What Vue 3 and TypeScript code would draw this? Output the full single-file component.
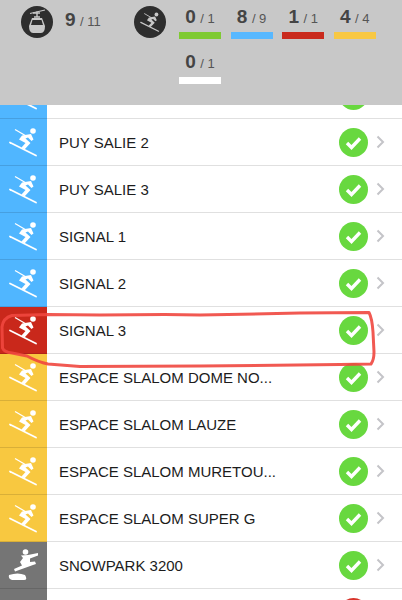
<script setup lang="ts">
// 雪道状态列表
type Run = { name: string; color: string; kind: 'ski' | 'board' | 'none'; status?: 'open' | 'closed' }

const runs: Run[] = [
  { name: '', color: 'blue', kind: 'ski' },
  { name: 'PUY SALIE 2', color: 'blue', kind: 'ski' },
  { name: 'PUY SALIE 3', color: 'blue', kind: 'ski' },
  { name: 'SIGNAL 1', color: 'blue', kind: 'ski' },
  { name: 'SIGNAL 2', color: 'blue', kind: 'ski' },
  { name: 'SIGNAL 3', color: 'red', kind: 'ski' },
  { name: 'ESPACE SLALOM DOME NO...', color: 'yellow', kind: 'ski' },
  { name: 'ESPACE SLALOM LAUZE', color: 'yellow', kind: 'ski' },
  { name: 'ESPACE SLALOM MURETOU...', color: 'yellow', kind: 'ski' },
  { name: 'ESPACE SLALOM SUPER G', color: 'yellow', kind: 'ski' },
  { name: 'SNOWPARK 3200', color: 'grey', kind: 'board' },
  { name: '', color: 'grey', kind: 'none', status: 'closed' },
]

const stats = [
  { done: 0, total: 1, color: 'green' },
  { done: 8, total: 9, color: 'blue' },
  { done: 1, total: 1, color: 'red' },
  { done: 4, total: 4, color: 'yellow' },
  { done: 0, total: 1, color: 'white' },
]
</script>

<template>
  <div class="page">
    <!-- 顶部统计 -->
    <header class="summary">
      <div class="lifts">
        <svg class="badge" viewBox="0 0 32 32">
          <circle cx="16" cy="16" r="16" fill="#2e2e2e" />
          <path d="M9 7.5 L24 4" stroke="#c8c8c8" stroke-width="1.2" fill="none" />
          <path d="M16 5.5 V11 M12 7 h7 M13 11 h6" stroke="#c8c8c8" stroke-width="1.4" fill="none" />
          <path d="M11 12 h10 l3 8 q0 7 -4 7 h-8 q-4 0 -4 -7 z" fill="#c8c8c8" />
          <path d="M11.5 14 h9 l1.5 5 h-12 z" fill="#2e2e2e" />
        </svg>
        <span class="count"><b>9</b> <i>/ 11</i></span>
      </div>
      <svg class="badge ski-badge" viewBox="0 0 47 46">
        <circle cx="23.5" cy="23" r="23.5" fill="#2e2e2e" />
        <g fill="#c8c8c8" stroke="#c8c8c8">
          <circle cx="33" cy="12" r="2.8" stroke="none" />
          <path d="M15 10.5 L27 17.5" stroke-width="1.3" fill="none" />
          <path d="M31 15 L22 16.5 L19 20.5 L25.5 24 L21.5 28.5 L24.5 30.5 L30.5 24 L25.5 19.5 L28 18.5 L31.5 22 L33.5 20.5 Z" stroke="none" />
          <path d="M10 23.5 L36 36.5" stroke-width="1.8" fill="none" stroke-linecap="round" />
        </g>
      </svg>
      <div class="stats">
        <div v-for="s in stats" :key="s.color" class="stat">
          <span class="count"><b>{{ s.done }}</b> <i>/ {{ s.total }}</i></span>
          <span class="bar" :class="s.color"></span>
        </div>
      </div>
    </header>

    <div class="viewport">
      <ul class="list">
        <li v-for="(r, i) in runs" :key="i" class="row">
          <div class="cell" :class="r.color">
            <svg v-if="r.kind === 'ski'" class="icon" viewBox="0 0 47 46">
              <g fill="#fff" stroke="#fff">
                <circle cx="33" cy="12" r="2.8" stroke="none" />
                <path d="M15 10.5 L27 17.5" stroke-width="1.3" fill="none" />
                <path d="M31 15 L22 16.5 L19 20.5 L25.5 24 L21.5 28.5 L24.5 30.5 L30.5 24 L25.5 19.5 L28 18.5 L31.5 22 L33.5 20.5 Z" stroke="none" />
                <path d="M10 23.5 L36 36.5" stroke-width="1.8" fill="none" stroke-linecap="round" />
              </g>
            </svg>
            <svg v-else-if="r.kind === 'board'" class="icon" viewBox="0 0 47 46">
              <g fill="#fff">
                <circle cx="25.5" cy="10" r="2.8" />
                <path d="M21 13.5 L28 13 L38 11 L38 13.5 L30 16.5 L30 20 L35 19.5 L36 22 L33 23 L15 29.5 L14 27 L22 23.5 L20 20 L23 16 Z" />
                <path d="M9 33 Q18 30 25 33 Q28 38 24 38 L12 38 Q8 37 9 33 Z" />
              </g>
            </svg>
          </div>
          <div class="body">
            <span class="name">{{ r.name }}</span>
            <svg v-if="r.status !== 'closed'" class="check" viewBox="0 0 29 29">
              <circle cx="14.5" cy="14.5" r="14.5" fill="#68d83f" />
              <path d="M8 15 L12.5 19.5 L21 10.5" stroke="#fff" stroke-width="3.4" fill="none" />
            </svg>
            <span v-else class="check closed"></span>
            <svg class="chevron" viewBox="0 0 9 14">
              <path d="M1.5 1.5 L7 7 L1.5 12.5" stroke="#c4c4c8" stroke-width="2" fill="none" />
            </svg>
          </div>
        </li>
      </ul>
    </div>

    <!-- 手绘红圈标注 -->
    <svg class="scribble" viewBox="0 0 402 600">
      <path
        d="M48 314.5 L12 315.5 Q3 318 2 327 L2.5 348 Q4 352 12 353 L27 356 Q38 362 48 364 L80 366.5 L200 366 L340 364.5 L371 364 Q374 360 374 352 L373 332 Q372 318 369 312.5 L300 313 L200 315 L165 314.5 L100 315 Z"
        fill="none"
        stroke="#f0473f"
        stroke-width="3"
        stroke-linejoin="round"
        opacity="0.9"
      />
    </svg>
  </div>
</template>

<style>
body {
  margin: 0;
  background: #fff;
}
</style>

<style scoped>
.page {
  position: relative;
  width: 402px;
  height: 600px;
  overflow: hidden;
  display: flex;
  flex-direction: column;
  font-family: "Liberation Sans", Arial, sans-serif;
}

.summary {
  flex: none;
  height: 105px;
  box-sizing: border-box;
  background: #c8c8c8;
  padding: 6px 0 0 21px;
  display: flex;
  align-items: flex-start;
}

.lifts {
  display: flex;
  align-items: center;
  width: 113px;
}

.badge {
  width: 32px;
  height: 32px;
  flex: none;
}

.lifts .count {
  margin-left: 12px;
}

.ski-badge {
  margin-right: 13px;
}

.stats {
  display: grid;
  grid-template-columns: repeat(4, 42px);
  column-gap: 9.6px;
  row-gap: 6px;
}

.stat {
  display: flex;
  flex-direction: column;
  align-items: center;
  height: 39px;
}

.count {
  color: #444;
  white-space: nowrap;
  line-height: 22px;
  height: 26px;
}

.count b {
  font-size: 19px;
  font-weight: 700;
}

.count i {
  font-style: normal;
  font-size: 13px;
  color: #555;
}

.bar {
  width: 42px;
  height: 7px;
}

.bar.green { background: #7fca33; }
.bar.blue { background: #58b8ff; }
.bar.red { background: #c92a1d; }
.bar.yellow { background: #f8c843; }
.bar.white { background: #fff; }

.viewport {
  flex: 1;
  overflow: hidden;
}

.list {
  list-style: none;
  margin: -33px 0 0;
  padding: 0;
}

.row {
  display: flex;
  height: 47px;
  background: #fff;
}

.cell {
  width: 47px;
  flex: none;
  box-sizing: border-box;
  border-bottom: 1px solid rgba(0, 0, 0, 0.12);
}

.cell.blue { background: #50b6ff; }
.cell.red { background: #c9281b; }
.cell.yellow { background: #f8c840; }
.cell.grey { background: #757575; }

.icon {
  display: block;
  width: 47px;
  height: 46px;
}

.body {
  flex: 1;
  min-width: 0;
  box-sizing: border-box;
  border-bottom: 1px solid #e0e0e0;
  display: flex;
  align-items: center;
  padding-left: 12px;
}

.name {
  flex: 1;
  font-size: 15px;
  color: #1c1c1c;
  white-space: nowrap;
}

.check {
  width: 29px;
  height: 29px;
  flex: none;
}

.check.closed {
  border-radius: 50%;
  background: #d8332a;
}

.chevron {
  width: 9px;
  height: 14px;
  margin: 0 17px 0 8px;
  flex: none;
}

.scribble {
  position: absolute;
  inset: 0;
  width: 402px;
  height: 600px;
  pointer-events: none;
}
</style>
